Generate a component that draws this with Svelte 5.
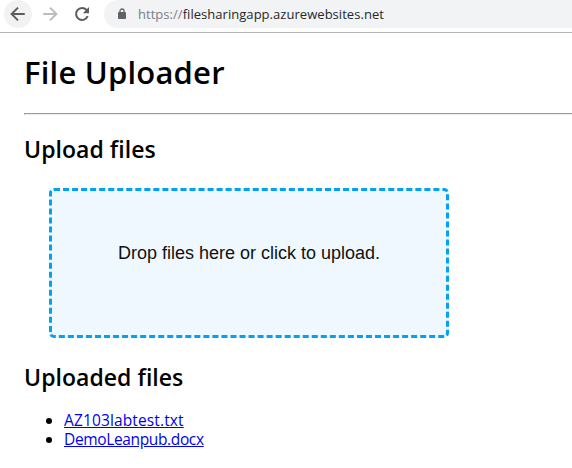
<script>
  const files = [
    { name: 'AZ103labtest.txt', spacing: 0.13 },
    { name: 'DemoLeanpub.docx', spacing: -0.36 },
  ];
</script>

<div class="window">
  <header class="toolbar">
    <button class="nav active" aria-label="Back">
      <svg viewBox="0 0 28 28"><path d="M20.8 14H8.2M14 7.6L7.6 14l6.4 6.4" /></svg>
    </button>
    <button class="nav muted" aria-label="Forward">
      <svg viewBox="0 0 28 28"><path d="M7.2 14h12.6M14 7.6l6.4 6.4-6.4 6.4" /></svg>
    </button>
    <button class="nav" aria-label="Reload">
      <svg viewBox="0 0 28 28">
        <path d="M18.6 10a6 6 0 1 0 1.1 6" />
        <path class="solid" d="M21 7v6.2h-6.2z" />
      </svg>
    </button>
    <div class="address">
      <svg class="lock" viewBox="0 0 8 12">
        <path class="shackle" d="M2 5V3a2 2 0 0 1 4 0v2" />
        <rect x="0" y="4" width="8" height="7" rx="0.8" />
      </svg>
      <span class="url"><span class="scheme">https://</span>filesharingapp.azurewebsites.net</span>
    </div>
  </header>

  <main>
    <h1>File Uploader</h1>
    <hr />
    <h2 class="upload">Upload files</h2>
    <div class="dropzone">Drop files here or click to upload.</div>
    <h2 class="uploaded">Uploaded files</h2>
    <ul>
      {#each files as file}
        <li><a href="#file" style="letter-spacing: {file.spacing}px">{file.name}</a></li>
      {/each}
    </ul>
  </main>
</div>

<style>
  :global(body) {
    margin: 0;
    background: #fff;
  }

  .window {
    height: 468px;
    overflow: hidden;
    background: #fff;
    color: #000;
    font-family: 'Trebuchet MS', 'Open Sans', 'Noto Sans', sans-serif;
  }

  .toolbar {
    display: flex;
    height: 32px;
    padding-left: 4px;
    border-bottom: 1px solid #b3b4b5;
  }

  .nav {
    flex: none;
    width: 28px;
    height: 28px;
    margin: 0 4px 0 0;
    padding: 0;
    border: 0;
    border-radius: 50%;
    background: none;
    color: #5a5d61;
  }

  .nav.active {
    background: #f2f2f2;
  }

  .nav.muted {
    color: #babcbe;
  }

  .nav svg {
    display: block;
    width: 28px;
    height: 28px;
    fill: none;
    stroke: currentColor;
    stroke-width: 2;
  }

  .nav .solid {
    fill: currentColor;
    stroke: none;
  }

  .address {
    display: flex;
    flex: 1;
    align-items: center;
    height: 28px;
    margin-left: 4px;
    padding-left: 14px;
    border-radius: 14px 0 0 14px;
    background: #f1f3f4;
  }

  .lock {
    width: 8px;
    height: 12px;
    fill: #5f6368;
  }

  .lock .shackle {
    fill: none;
    stroke: #5f6368;
    stroke-width: 1.3;
  }

  .url {
    margin-left: 12px;
    color: #26282b;
    font: 13px/28px 'Segoe UI', 'Open Sans', sans-serif;
    letter-spacing: 0.04px;
    white-space: nowrap;
  }

  .scheme {
    color: #7b7f84;
  }

  main {
    padding-left: 24px;
  }

  h1,
  h2 {
    margin: 0;
    font-weight: 600;
    white-space: nowrap;
  }

  h1 {
    padding-top: 19px;
    font-size: 31px;
    line-height: 40px;
    letter-spacing: 0.2px;
  }

  hr {
    height: 0;
    margin: 21px 0 0;
    border: 1px solid #9a9a9a;
    border-right: 0;
    border-bottom-color: #eee;
  }

  h2 {
    font-size: 23px;
    line-height: 30px;
    letter-spacing: 0.05px;
  }

  .upload {
    margin-top: 19px;
  }

  .dropzone {
    box-sizing: border-box;
    width: 400px;
    height: 150px;
    margin: 24px 0 0 25px;
    padding-top: 52px;
    border: 3px dashed #03a1f1;
    border-radius: 5px;
    background: #f0f8ff;
    color: #111;
    font: 18px/20px Arial, 'Liberation Sans', sans-serif;
    text-align: center;
  }

  .uploaded {
    margin-top: 24px;
  }

  ul {
    margin: 19px 0 0;
    padding-left: 40px;
    font-size: 15.5px;
    line-height: 19px;
  }

  a {
    color: #0000ee;
    text-decoration: underline;
  }
</style>
